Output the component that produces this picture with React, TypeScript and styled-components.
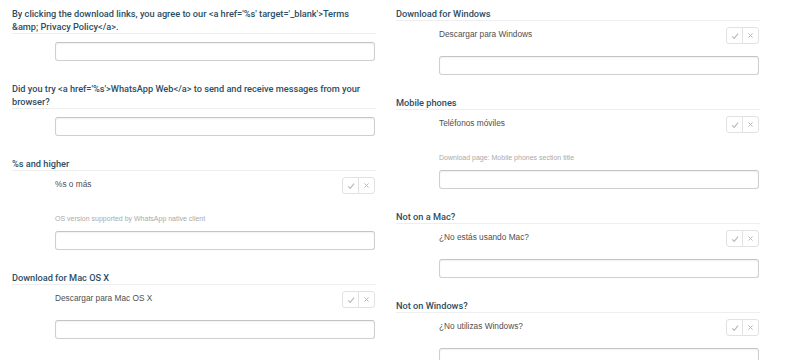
import styled, { createGlobalStyle } from "styled-components";

interface Entry {
  title: string;
  source?: string;
  note?: string;
}

const leftEntries: Entry[] = [
  {
    title:
      "By clicking the download links, you agree to our <a href='%s' target='_blank'>Terms &amp; Privacy Policy</a>.",
  },
  {
    title:
      "Did you try <a href='%s'>WhatsApp Web</a> to send and receive messages from your browser?",
  },
  {
    title: "%s and higher",
    source: "%s o más",
    note: "OS version supported by WhatsApp native client",
  },
  { title: "Download for Mac OS X", source: "Descargar para Mac OS X" },
];

const rightEntries: Entry[] = [
  { title: "Download for Windows", source: "Descargar para Windows" },
  {
    title: "Mobile phones",
    source: "Teléfonos móviles",
    note: "Download page: Mobile phones section title",
  },
  { title: "Not on a Mac?", source: "¿No estás usando Mac?" },
  { title: "Not on Windows?", source: "¿No utilizas Windows?" },
];

const CheckIcon = () => (
  <svg width="8" height="8" viewBox="0 0 10 10">
    <path d="M1.5 5.5 L4 8 L8.8 2" fill="none" stroke="#b9b9b9" strokeWidth="1.4" />
  </svg>
);

const CrossIcon = () => (
  <svg width="7" height="7" viewBox="0 0 10 10">
    <path d="M2 2 L8 8 M8 2 L2 8" fill="none" stroke="#b9b9b9" strokeWidth="1.4" />
  </svg>
);

const Section = ({ entry }: { entry: Entry }) => (
  <SectionWrapper>
    <Title>{entry.title}</Title>
    <Body $hasSource={!!entry.source}>
      {entry.source && (
        <SourceRow $hasNote={!!entry.note}>
          <SourceText>{entry.source}</SourceText>
          <ButtonGroup>
            <IconButton>
              <CheckIcon />
            </IconButton>
            <IconButton>
              <CrossIcon />
            </IconButton>
          </ButtonGroup>
        </SourceRow>
      )}
      {entry.note && <Note>{entry.note}</Note>}
      <TextInput />
    </Body>
  </SectionWrapper>
);

const App = () => {
  return (
    <>
      <GlobalStyle />
      <Page>
        <Column>
          {leftEntries.map((e) => (
            <Section key={e.title} entry={e} />
          ))}
        </Column>
        <Column>
          {rightEntries.map((e) => (
            <Section key={e.title} entry={e} />
          ))}
        </Column>
      </Page>
    </>
  );
};

const GlobalStyle = createGlobalStyle`
  body {
    margin: 0;
    background: #ffffff;
    font-family: "Liberation Sans", Arial, sans-serif;
  }
`;

const Page = styled.div`
  display: grid;
  grid-template-columns: 364px 364px;
  column-gap: 20px;
  padding: 7px 0 0 12px;
  height: 360px;
  box-sizing: border-box;
  overflow: hidden;
`;

const Column = styled.div`
  display: flex;
  flex-direction: column;
`;

const SectionWrapper = styled.div`
  display: flex;
  flex-direction: column;
  margin-bottom: 21px;
`;

const Title = styled.div`
  font-family: Roboto, "Liberation Sans", sans-serif;
  font-size: 9.2px;
  font-weight: 500;
  line-height: 13px;
  color: #2c4d63;
  border-bottom: 1px solid #eeeeee;
`;

const Body = styled.div<{ $hasSource: boolean }>`
  display: flex;
  flex-direction: column;
  padding: ${({ $hasSource }) => ($hasSource ? "6px" : "8px")} 0 0 43px;
`;

const SourceRow = styled.div<{ $hasNote: boolean }>`
  display: flex;
  justify-content: space-between;
  align-items: center;
  height: 17px;
  margin-bottom: ${({ $hasNote }) => ($hasNote ? "19px" : "12px")};
`;

const SourceText = styled.span`
  font-size: 8.3px;
  line-height: 13px;
  margin-top: -2px;
  color: #4f4f4f;
`;

const ButtonGroup = styled.div`
  display: flex;
  height: 17px;
  border: 1px solid #e2e2e2;
  border-radius: 3px;
  box-sizing: border-box;
  margin-right: 1px;
`;

const IconButton = styled.div`
  width: 15px;
  display: flex;
  align-items: center;
  justify-content: center;

  & + & {
    border-left: 1px solid #e2e2e2;
  }
`;

const Note = styled.div`
  font-size: 7px;
  line-height: 12px;
  color: #aaaaaa;
  margin-bottom: 6px;
`;

const TextInput = styled.div`
  height: 19px;
  border: 1px solid #cfcfcf;
  border-top-color: #c4c4c4;
  border-radius: 3px;
  box-sizing: border-box;
  box-shadow: inset 0 1px 2px rgba(0, 0, 0, 0.06);
  margin-right: 1px;
`;

export default App;
